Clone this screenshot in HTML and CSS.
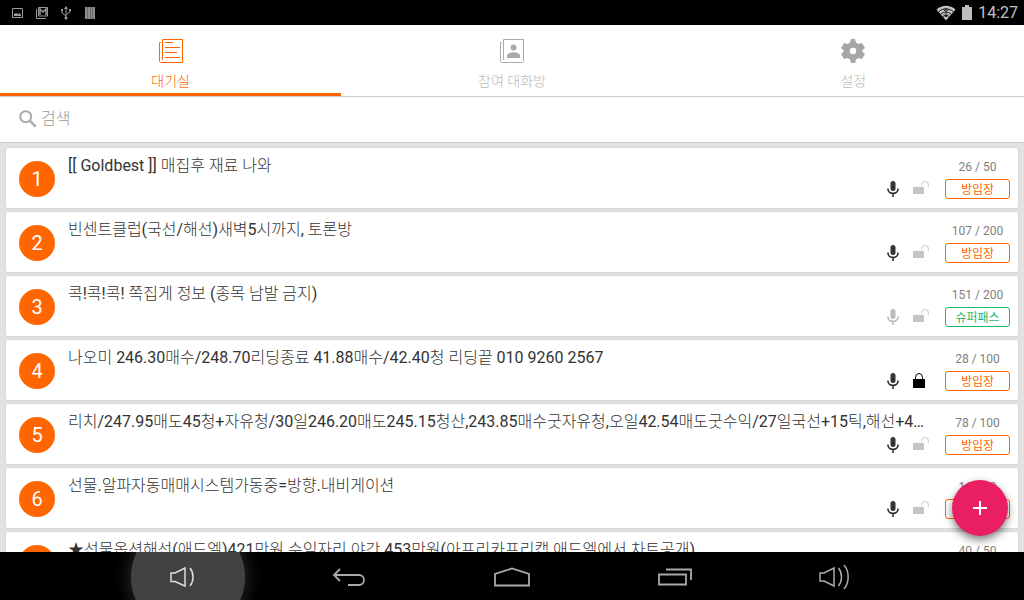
FILE: index.html
```html
<!DOCTYPE html>
<html lang="ko">
<head>
<meta charset="utf-8">
<meta name="viewport" content="width=device-width, initial-scale=1">
<title>대기실</title>
<link rel="stylesheet" href="styles.css">
</head>
<body>
<svg class="symbols" aria-hidden="true">
  <symbol id="mic" viewBox="0 0 12 16"><rect x="3.5" y="0" width="5" height="10" rx="2.5" fill="currentColor"/><path d="M.9 7.5c0 3 2.2 4.9 5.1 4.9s5.100-1.900 5.100-4.900M6 12v4" fill="none" stroke="currentColor" stroke-width="1.600"/></symbol>
  <symbol id="unlock" viewBox="0 0 16 16"><path d="M0 6h11v7H0z" fill="#c4c4c4"/><path d="M8.500 5V3.500a3.500 3 0 0 1 7 0V6" fill="none" stroke="#cccccc"/></symbol>
  <symbol id="lock" viewBox="0 0 16 16"><path d="M0 6h12v9H0z" fill="#000"/><path d="M2.500 6V4.500a3.500 4 0 0 1 7 0V6" fill="none" stroke="#000"/></symbol>
</svg>
<div class="screen">
  <header class="status">
    <div class="status-group">
      <svg width="12" height="12" viewBox="0 0 12 12"><path d="M.5 1.500h10v9H.5z" fill="none" stroke="#999"/><path d="M2 9V7l2-1 2 1 1.500-1L9 8v1z" fill="#999"/></svg>
      <svg width="12" height="12" viewBox="0 0 12 12"><path d="M.5 2v9.500H10" fill="none" stroke="#999"/><path d="M2.500.5h9v8.500h-9z" fill="none" stroke="#999"/><path d="M4 8V2l3 3 3-3v6" fill="none" stroke="#999" stroke-width="1.500"/></svg>
      <svg width="12" height="14" viewBox="0 0 12 14"><path d="M6 1v11M2 4v3l4 3M10 4v2L6 8.500" fill="none" stroke="#999"/><path d="M4 3l2-3 2 3zM1 3h2v2H1zM9 3h2v2H9z" fill="#999"/><circle cx="6" cy="12" r="1.500" fill="#999"/></svg>
      <svg width="12" height="12" viewBox="0 0 12 12"><path d="M1 0h10v12H1z" fill="#8c8c8c"/><path d="M3.500 0v12M6.500 0v12M8.500 0v12" stroke="#555" stroke-width=".6"/></svg>
    </div>
    <div class="status-group status-right">
      <svg width="20" height="16" viewBox="0 0 20 16"><path d="M.5 4.500C6-.5 14-.5 19.500 4.500L10 15.500z" fill="#c0c0c0"/><path d="M3 6.500c4-3.500 10-3.500 14 0M5 9c3-2.500 7-2.500 10 0M7 11.500c2-1.500 4-1.500 6 0" fill="none" stroke="#000" stroke-width=".9"/><path d="M10 4v7M8 6l2-2.500L12 6M8 9.500l2 2.500 2-2.500" fill="none" stroke="#222"/></svg>
      <svg width="12" height="16" viewBox="0 0 12 16"><path d="M1 2h3V0h4v2h3v13H1z" fill="#bebebe"/></svg>
      <time class="clock">14:27</time>
    </div>
  </header>

  <nav class="tabs">
    <button class="tab active" type="button">
      <svg width="24" height="24" viewBox="0 0 24 24" fill="none" stroke="#ff6600"><path d="M3.500 21V.5h20v23h-22l-1-1v-19H2M6 3.500h8M6 8.500h15M6 13.500h12M6 18.500h15"/></svg>
      <span>대기실</span>
    </button>
    <button class="tab" type="button">
      <svg width="24" height="24" viewBox="0 0 24 24" fill="none" stroke="#aaa"><path d="M3.500 21V.5h20v22l-1 1h-21l-1-1v-19H2"/><circle cx="13.500" cy="8.500" r="3" fill="#aaa" stroke="none"/><path d="M7 19v-2c0-5 13-5 13 0v2z" fill="#aaa" stroke="none"/></svg>
      <span>참여 대화방</span>
    </button>
    <button class="tab" type="button">
      <svg width="24" height="24" viewBox="0 0 24 24"><path fill="#a6a6a6" fill-rule="evenodd" d="M10 0h4l1 3.500 2.500 1.500L21 4l3 5-2.500 2v2l2.500 2-3 5-3.500-1-2.500 1.500L14 24h-4l-1-3.500L6.500 19 3 20l-3-5 2.500-2v-2L0 9l3-5 3.500 1L9 3.500zM12 8.800a3.200 3.200 0 1 0 0 6.400 3.200 3.200 0 0 0 0-6.400z"/></svg>
      <span>설정</span>
    </button>
  </nav>

  <label class="search">
    <svg width="18" height="18" viewBox="0 0 18 18" fill="none" stroke="#aaa"><circle cx="6.700" cy="6.700" r="5.500" stroke-width="2"/><path d="M10.700 10.700l6 6" stroke-width="2.400"/></svg>
    <input type="search" placeholder="검색" aria-label="검색">
  </label>

  <main class="rooms">
    <article class="card">
      <span class="rank">1</span>
      <div class="body"><h2 class="title">[[ Goldbest ]] 매집후 재료 나와</h2><div class="icons"><svg class="mic"><use href="#mic"/></svg><svg class="lock"><use href="#unlock"/></svg></div></div>
      <div class="side"><span class="count">26 / 50</span><button class="enter" type="button">방입장</button></div>
    </article>
    <article class="card">
      <span class="rank">2</span>
      <div class="body"><h2 class="title">빈센트클럽(국선/해선)새벽5시까지, 토론방</h2><div class="icons"><svg class="mic"><use href="#mic"/></svg><svg class="lock"><use href="#unlock"/></svg></div></div>
      <div class="side"><span class="count">107 / 200</span><button class="enter" type="button">방입장</button></div>
    </article>
    <article class="card">
      <span class="rank">3</span>
      <div class="body"><h2 class="title">콕!콕!콕! 쪽집게 정보 (종목 남발 금지)</h2><div class="icons"><svg class="mic muted"><use href="#mic"/></svg><svg class="lock"><use href="#unlock"/></svg></div></div>
      <div class="side"><span class="count">151 / 200</span><button class="enter pass" type="button">슈퍼패스</button></div>
    </article>
    <article class="card">
      <span class="rank">4</span>
      <div class="body"><h2 class="title">나오미 246.30매수/248.70리딩종료 41.88매수/42.40청 리딩끝 010 9260 2567</h2><div class="icons"><svg class="mic"><use href="#mic"/></svg><svg class="lock"><use href="#lock"/></svg></div></div>
      <div class="side"><span class="count">28 / 100</span><button class="enter" type="button">방입장</button></div>
    </article>
    <article class="card">
      <span class="rank">5</span>
      <div class="body"><h2 class="title">리치/247.95매도45청+자유청/30일246.20매도245.15청산,243.85매수굿자유청,오일42.54매도굿수익/27일국선+15틱,해선+4…</h2><div class="icons"><svg class="mic"><use href="#mic"/></svg><svg class="lock"><use href="#unlock"/></svg></div></div>
      <div class="side"><span class="count">78 / 100</span><button class="enter" type="button">방입장</button></div>
    </article>
    <article class="card">
      <span class="rank">6</span>
      <div class="body"><h2 class="title">선물.알파자동매매시스템가동중=방향.내비게이션</h2><div class="icons"><svg class="mic"><use href="#mic"/></svg><svg class="lock"><use href="#unlock"/></svg></div></div>
      <div class="side"><span class="count">16 / 50</span><button class="enter" type="button">방입장</button></div>
    </article>
    <article class="card">
      <span class="rank">7</span>
      <div class="body"><h2 class="title">★선물옵션해선(애드엘)421만원 수익자리 야간 453만원(아프리카프리캡 애드엘에서 차트공개)</h2><div class="icons"><svg class="mic"><use href="#mic"/></svg><svg class="lock"><use href="#unlock"/></svg></div></div>
      <div class="side"><span class="count">40 / 50</span><button class="enter" type="button">방입장</button></div>
    </article>
    <button class="fab" type="button" aria-label="방 만들기"><svg width="14" height="14" viewBox="0 0 14 14"><path d="M7 0v14M0 7h14" stroke="#fff" stroke-width="2"/></svg></button>
  </main>

  <footer class="navbar">
    <button class="key pressed" type="button" aria-label="볼륨 낮추기"><svg width="34" height="24" viewBox="0 0 34 24" fill="none" stroke="#ddd" stroke-width="1.500"><path d="M2 8h4l10-5v18L6 16.500H2z"/><path d="M21 3c4 5 4 13 0 18"/></svg></button>
    <button class="key" type="button" aria-label="뒤로"><svg width="34" height="20" viewBox="0 0 34 20" fill="none" stroke="#aaa" stroke-width="1.800"><path d="M8 2L2 8l6 6M2 8h25a5 5 0 0 1 0 10H16"/></svg></button>
    <button class="key" type="button" aria-label="홈"><svg width="36" height="20" viewBox="0 0 36 20" fill="none" stroke="#aaa" stroke-width="1.800"><path d="M1 18.500V7l17-5.500L35 7v11.500z"/></svg></button>
    <button class="key" type="button" aria-label="최근 앱"><svg width="34" height="18" viewBox="0 0 34 18" fill="none" stroke="#aaa" stroke-width="1.800"><path d="M1 6.500h27v10H1zM8 1.500h25V12"/></svg></button>
    <button class="key" type="button" aria-label="볼륨 높이기"><svg width="40" height="26" viewBox="0 0 40 26" fill="none" stroke="#aaa" stroke-width="1.500"><path d="M2 9h4l10-5v18L6 17H2z"/><path d="M20.500 4c4 5 4 13 0 18M26 1c5.500 6 5.500 18 0 24"/></svg></button>
  </footer>
</div>
</body>
</html>
```
FILE: styles.css
```css
* { box-sizing: border-box; }
body, h2 { margin: 0; }
body, button, input { font-family: Roboto, "Noto Sans CJK KR Light", "Noto Sans CJK KR", sans-serif; }
button { padding: 0; border: 0; background: none; }
svg { display: block; flex: none; }
.symbols { position: absolute; width: 0; height: 0; }

.screen {
  display: flex;
  flex-direction: column;
  height: 100vh;
  overflow: hidden;
  background: #e2e2e2;
}

.status {
  display: flex;
  flex: none;
  justify-content: space-between;
  height: 25px;
  padding: 0 6px 0 12px;
  background: #000;
}
.status-group { display: flex; align-items: center; gap: 12px; }
.status-right { gap: 5px; }
.clock { color: #c0c0c0; font-size: 16px; }

.tabs {
  display: grid;
  flex: none;
  grid-template-columns: repeat(3, 1fr);
  height: 72px;
  border-bottom: 1px solid #ccc;
  background: #fff;
}
.tab {
  display: flex;
  flex-direction: column;
  align-items: center;
  gap: 8px;
  padding-top: 14px;
  border-bottom: 3px solid transparent;
  color: #bbb;
  font-size: 14px;
  line-height: 20px;
}
.tab.active { border-color: #ff6600; color: #ff6600; }

.search {
  display: flex;
  flex: none;
  align-items: center;
  gap: 4px;
  height: 46px;
  padding: 0 19px 2px;
  border-bottom: 1px solid #ccc;
  background: #fff;
}
.search input {
  flex: 1;
  min-width: 0;
  padding: 0;
  border: 0;
  outline: 0;
  background: none;
  font-size: 16px;
}
.search input::placeholder { color: #999; }

.rooms {
  position: relative;
  display: flex;
  flex: 1;
  flex-direction: column;
  gap: 4px;
  min-height: 0;
  padding: 5px 6px 0;
  overflow: hidden;
}
.card {
  display: flex;
  flex: none;
  height: 60px;
  padding: 0 8px 0 13px;
  border-radius: 2px;
  background: #fff;
  box-shadow: 0 0 1px 1px #d9d9d9;
}
.rank {
  flex: none;
  align-self: center;
  width: 36px;
  margin-top: 2px;
  border-radius: 50%;
  background: #ff6600;
  color: #fff;
  font-size: 20px;
  line-height: 36px;
  text-align: center;
}
.body {
  flex: 1;
  min-width: 0;
  padding: 6px 10px 0 13px;
}
.title {
  overflow: hidden;
  color: #333;
  font-size: 16px;
  font-weight: 400;
  line-height: 24px;
  text-overflow: ellipsis;
  white-space: nowrap;
}
.icons { display: flex; justify-content: flex-end; gap: 14px; padding: 3px 6px 0 0; }
.mic { width: 12px; height: 16px; color: #333; }
.mic.muted { color: #bbb; }
.lock { width: 16px; height: 16px; }
.side {
  display: flex;
  flex: none;
  flex-direction: column;
  align-items: center;
  width: 65px;
  padding-top: 11px;
}
.count { color: #808080; font-size: 12px; line-height: 16px; }
.enter {
  width: 100%;
  height: 20px;
  margin-top: 4px;
  padding-top: 1px;
  border: 1px solid #ff6600;
  border-radius: 3px;
  color: #ff6600;
  font-family: Roboto, "Noto Sans CJK KR", sans-serif;
  font-size: 12px;
  line-height: 18px;
}
.enter.pass { border-color: #1fb866; color: #1fb866; }

.fab {
  position: absolute;
  right: 16px;
  bottom: 16px;
  display: grid;
  place-items: center;
  width: 56px;
  height: 56px;
  border-radius: 50%;
  background: #e91e63;
  box-shadow: 0 4px 8px rgba(0, 0, 0, .5);
}

.navbar {
  display: grid;
  flex: none;
  grid-template-columns: repeat(5, 1fr);
  height: 48px;
  padding: 2px 104px 0;
  overflow: hidden;
  background: #000;
}
.key { position: relative; display: grid; place-items: center; }
.key svg { position: relative; }
.pressed::before {
  content: "";
  position: absolute;
  top: -34px;
  left: 27px;
  width: 114px;
  height: 114px;
  border-radius: 50%;
  background: #424242;
  box-shadow: 0 0 18px #333;
}
```
